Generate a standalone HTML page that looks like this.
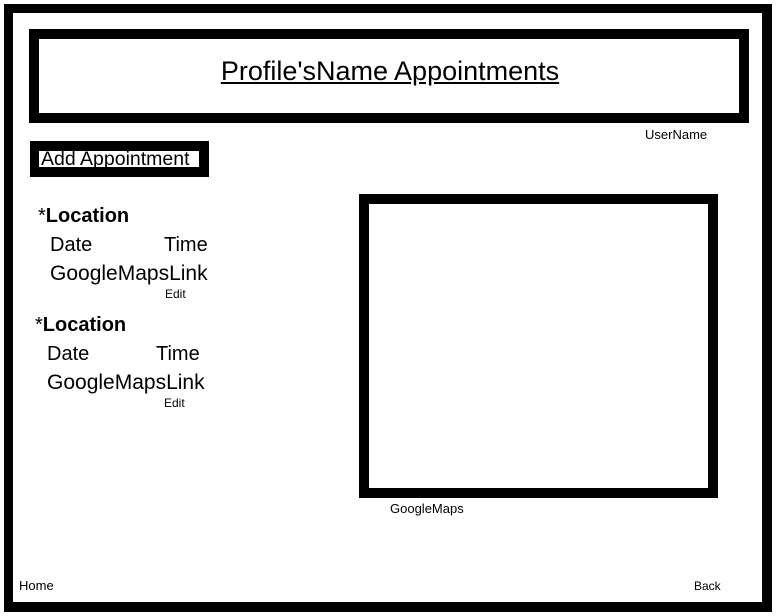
<!DOCTYPE html>
<html><head><meta charset="utf-8"><style>
*{margin:0;padding:0;box-sizing:border-box}
body{width:776px;height:616px;background:#fff;position:relative;overflow:hidden;font-family:"Liberation Sans",sans-serif;color:#000}
.b{position:absolute;border:10px solid #000}
.t{position:absolute;white-space:nowrap;line-height:1}
</style></head><body>
<div class="b" style="left:4px;top:4px;width:768px;height:608px;border-width:9px 10px 10px 9px"></div>
<div class="b" style="left:29px;top:29px;width:720px;height:94px"></div>
<div class="t" style="left:0;width:780px;text-align:center;top:58px;font-size:27px;text-decoration:underline">Profile'sName Appointments</div>
<div class="t" style="left:645px;top:128px;font-size:13px">UserName</div>
<div class="b" style="left:30px;top:141px;width:179px;height:36px;border-width:10px 10px 10px 9px"></div>
<div class="t" style="left:41px;top:150px;font-size:19.5px">Add Appointment</div>

<div class="t" style="left:38px;top:206px;font-size:20px">*<b>Location</b></div>
<div class="t" style="left:50px;top:235px;font-size:20px">Date</div>
<div class="t" style="left:164px;top:235px;font-size:20px">Time</div>
<div class="t" style="left:50px;top:263px;font-size:21px">GoogleMapsLink</div>
<div class="t" style="left:165px;top:288px;font-size:12px">Edit</div>

<div class="t" style="left:35px;top:315px;font-size:20px">*<b>Location</b></div>
<div class="t" style="left:47px;top:344px;font-size:20px">Date</div>
<div class="t" style="left:156px;top:344px;font-size:20px">Time</div>
<div class="t" style="left:47px;top:372px;font-size:21px">GoogleMapsLink</div>
<div class="t" style="left:164px;top:397px;font-size:12px">Edit</div>

<div class="b" style="left:359px;top:194px;width:359px;height:304px"></div>
<div class="t" style="left:390px;top:502px;font-size:13px">GoogleMaps</div>
<div class="t" style="left:19px;top:579px;font-size:13px">Home</div>
<div class="t" style="left:694px;top:580px;font-size:12px">Back</div>
</body></html>
